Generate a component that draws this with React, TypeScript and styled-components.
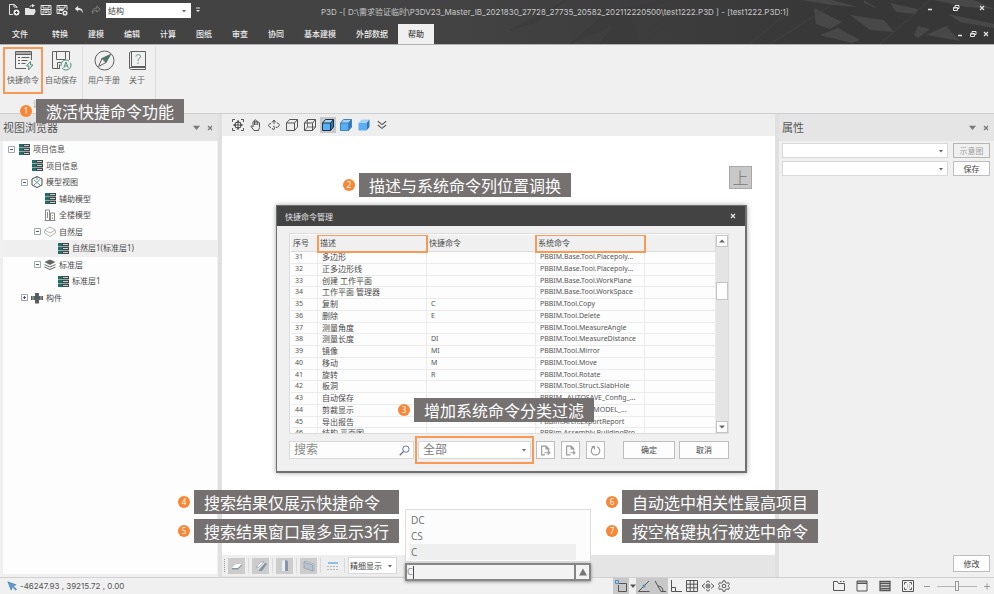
import React from "react";
import styled, { createGlobalStyle, css } from "styled-components";

const ACCENT = "#f89a56";
const BADGE = "#f88635";
const INK = "#555555";

const GlobalStyle = createGlobalStyle`
  *, *::before, *::after { box-sizing: border-box; }
  body { margin: 0; background: #f0f0f0; }
  body, button, input, select, table {
    font-family: "Noto Sans", "Noto Sans CJK SC", sans-serif;
    font-size: 8px;
    line-height: 12px;
    color: #4a4a4a;
  }
  button { padding: 0; margin: 0; cursor: default; }
  svg { display: block; flex: none; }
`;

/* ---------- shell ---------- */

const Shell = styled.div`
  position: relative;
  display: flex;
  flex-direction: column;
  min-height: 100vh;
  overflow: hidden;
`;

const Row = styled.div<{ $gap?: number }>`
  display: flex;
  align-items: center;
  gap: ${(p) => p.$gap ?? 0}px;
`;

const GhostButton = styled.button<{ $size?: number; $on?: boolean }>`
  display: grid;
  place-items: center;
  flex: none;
  width: ${(p) => p.$size ?? 16}px;
  height: ${(p) => Math.min(p.$size ?? 16, 16)}px;
  border: 0;
  color: inherit;
  background: ${(p) => (p.$on ? "#c8c8c8" : "transparent")};
`;

/* ---------- header ---------- */

const Header = styled.header`
  position: relative;
  background: linear-gradient(90deg, #434343 45%, #373737 85%);
  color: #e4e4e4;
  border-bottom: 1px solid #b0b0b0;
`;

const Shards = styled.svg`
  position: absolute;
  right: 0;
  top: 0;
  width: 544px;
  height: 44px;
`;

const TitleRow = styled.div`
  position: relative;
  display: grid;
  grid-template-columns: 313px 1fr 68px;
  height: 24px;
  padding: 0 0 4px 8px;
`;

const TitleText = styled.h1`
  margin: 3px 0 0;
  align-self: center;
  font-family: Inter, "Noto Sans CJK SC", sans-serif;
  font-size: 8px;
  font-weight: 400;
  white-space: nowrap;
  color: #c8c8c8;
`;

const WindowButtons = styled.div`
  display: flex;
  align-items: center;
  justify-content: space-between;
  height: 16px;
  padding-right: 8px;
`;

const TabRow = styled.nav`
  position: relative;
  display: flex;
  height: 20px;
  padding-left: 2px;
`;

const Tab = styled.button<{ $active?: boolean }>`
  border: 0;
  padding: 0 10px;
  background: ${(p) => (p.$active ? "#f0f0f0" : "transparent")};
  color: ${(p) => (p.$active ? "#444" : "#eeeeee")};
  font-weight: 500;
  white-space: nowrap;
  &:first-child { margin-right: 4px; }
`;

const MdiButtons = styled.div`
  display: flex;
  align-items: center;
  margin-left: auto;
  padding-right: 2px;
`;

/* ---------- combo box ---------- */

const ComboFrame = styled.span<{ $w?: number; $h?: number; $text?: number; $plain?: boolean }>`
  display: grid;
  align-items: center;
  flex: ${(p) => (p.$w ? "none" : "1")};
  width: ${(p) => (p.$w ? p.$w + "px" : "auto")};
  height: ${(p) => p.$h ?? 15}px;
  border: 1px solid ${(p) => (p.$plain ? "#ffffff" : "#d9d9d9")};
  background: #ffffff;
  color: #666;
  select {
    grid-area: 1 / 1;
    appearance: none;
    width: 100%;
    border: 0;
    padding: 0 10px 0 ${(p) => (p.$text ? 4 : 1)}px;
    background: transparent;
    font-size: ${(p) => p.$text ?? 8}px;
    line-height: 14px;
    color: ${(p) => (p.$text ? "#7b7b7b" : "#444")};
  }
  svg {
    grid-area: 1 / 1;
    justify-self: end;
    margin-right: 4px;
    pointer-events: none;
  }
`;

const Caret = ({ s = 4 }: { s?: number }) => (
  <svg width={s} height={s} viewBox="0 0 4 4">
    <path d="M0 1h4L2 3.4z" fill="currentColor" />
  </svg>
);

type ComboProps = { label: string; value: string; w?: number; h?: number; text?: number; plain?: boolean };
const Combo = ({ label, value, w, h, text, plain }: ComboProps) => (
  <ComboFrame $w={w} $h={h} $text={text} $plain={plain}>
    <select aria-label={label} defaultValue={value}>
      <option>{value}</option>
    </select>
    <Caret />
  </ComboFrame>
);

/* ---------- icons ---------- */

type IconProps = { size?: number; children: React.ReactNode; box?: number; sw?: number };
const Icon = ({ size = 12, box = 12, sw = 1, children }: IconProps) => (
  <svg width={size} height={size} viewBox={`0 0 ${box} ${box}`} fill="none" stroke="currentColor" strokeWidth={sw}>
    {children}
  </svg>
);

const NewIcon = () => (
  <Icon>
    <path d="M5 10.5H1.5v-10h5l2.5 2.500V4M6 .5V3h3" />
    <circle cx="8.500" cy="8.500" r="3" fill="#eee" stroke="none" />
    <path d="M8.500 7v3M7 8.500h3" stroke="#444" />
  </Icon>
);
const OpenIcon = () => (
  <Icon>
    <path d="M1 11V4h4l1 1h5v1.500H4L2 11zM2 11l2-4.500h8L10 11z" fill="currentColor" stroke="none" />
    <path d="M6 3c0-1 1-1.500 2.500-1.500" />
    <path d="M8 0l3 1.500L8 3.500z" fill="currentColor" stroke="none" />
  </Icon>
);
const SaveIcon = () => (
  <Icon>
    <path d="M1 1.500h10v9H1zM3 1.500V4h6V1.500M3 10.500V7h6v3.500M4.500 8.500h3M1 5.500h10" />
  </Icon>
);
const SaveAsIcon = () => (
  <Icon>
    <path d="M6 9.500H1v-8h10V6M3 1.500V4h6V1.500M3 9.500v-3h4M1 5.500h7" />
    <circle cx="9" cy="9" r="1.800" strokeWidth="1.600" />
  </Icon>
);
const UndoIcon = () => (
  <Icon size={10}>
    <path d="M5 1L1 4.500 5 8V6c3-.5 4.500.5 5 4 1.500-4-1-6.500-5-6.500z" fill="currentColor" stroke="none" />
  </Icon>
);
const RedoIcon = () => (
  <Icon size={10}>
    <path d="M7 1.500L11 5 7 8.500v-2C4 6 2.500 7 2 10 .5 6.500 3 3.800 7 3.800z" stroke="#8a8a8a" />
  </Icon>
);
const MinIcon = () => (
  <Icon size={8} box={8}>
    <path d="M2 5.500h4" strokeWidth="1.500" />
  </Icon>
);
const RestoreIcon = () => (
  <Icon size={8} box={8}>
    <path d="M1.500 3.500h4v3h-4zM3 3.500v-2h4v3H5.500M1.500 4h4" />
  </Icon>
);
const CloseIcon = () => (
  <Icon size={8} box={8}>
    <path d="M2 2l4 4M6 2L2 6" strokeWidth="1.200" />
  </Icon>
);

const ShortcutIcon = () => (
  <Icon size={21} box={21}>
    <path d="M13 18.500H2.500v-17h16V10M2.500 4.500h16M5 7.500h2M8.500 7.500h8M5 10.500h2M8.500 10.500h6M5 13.500h2M8.500 13.500h4" />
    <path d="M3 2h15v2H3z" fill="#aaa" stroke="none" />
    <path d="M17.500 11.500L13.500 16H16l-.5 4 4.500-5h-2.500z" stroke="#4f8f7c" />
  </Icon>
);
const AutosaveIcon = () => (
  <Icon size={21} box={21}>
    <path d="M9 18.500H1.500v-17h17V10M5.500 1.500v8h9v-8M6.500 18v-5.500h4M8.500 14.500V18" />
    <circle cx="15" cy="15" r="5" stroke="#4f8f7c" strokeDasharray="12 2" />
    <path d="M12.800 17.800L15 12l2.200 5.800M13.600 16h2.800" stroke="#4f8f7c" />
  </Icon>
);
const CompassIcon = () => (
  <Icon size={21} box={21}>
    <circle cx="10.500" cy="10.500" r="9.500" />
    <path d="M16.500 4.500L8 8.500l4 4z" fill="#3d8271" />
    <path d="M8 8.500L4.500 16.500l7.500-4z" fill="#f0f0f0" />
  </Icon>
);
const AboutIcon = () => (
  <Icon size={21} box={21}>
    <path d="M4.500 1.500h14v15h-14zM4.500 1.500C3 1.500 2.500 2 2.500 4v13c0 2 .5 2.500 2 2.500h14v-3M3 17.500h15" />
    <path d="M9 6.500C9 4 13.500 4 13.500 6.500 13.500 8.500 11 8 11 11M11 12.500V14" stroke="#4f8f7c" />
  </Icon>
);

const ListIcon = () => (
  <Icon size={11} box={11}>
    <path d="M0 0h11v11H0z" fill="#3c4a4a" stroke="none" />
    <path d="M0 0h4v3H0zM0 4h4v3H0zM0 8h4v3H0z" fill="#1d6f6b" stroke="none" />
    <path d="M5 1.500h5M5 5.500h5M5 9.500h5" stroke="#c5d0d0" />
    <path d="M0 3.500h11M0 7.500h11" stroke="#fff" strokeWidth=".5" />
  </Icon>
);
const ModelIcon = () => (
  <Icon size={12}>
    <path d="M6 .5l5 2.500v6L6 11.500 1 9V3z" />
    <path d="M3 4l6 5M9 3.500L3 9M6 .5V4" stroke="#3d8271" strokeWidth=".8" />
  </Icon>
);
const BuildingIcon = () => (
  <Icon size={12}>
    <path d="M.5 11.500h11M1.500 11.500V1h4v10.500M6.500 11.500V4h4v7.500M3.500 3v6M8.500 6v1M8.500 8.500v1.500" stroke="#888" />
  </Icon>
);
const LayerIcon = () => (
  <Icon size={12}>
    <path d="M6 1l5.500 3L6 7 .5 4zM.5 5v2L6 10.500 11.500 7V5" stroke="#b5b5b5" />
  </Icon>
);
const LayersIcon = () => (
  <Icon size={12}>
    <path d="M6 .5L11.500 3 6 6 .5 3z" fill="#666" stroke="none" />
    <path d="M.5 5.500L6 8l5.500-2.500M.5 8L6 10.500 11.500 8" stroke="#666" />
  </Icon>
);
const PartIcon = () => (
  <Icon size={12}>
    <path d="M4 1h4v3h4v4H8v3.500H4V8H0V4h4z" fill="#5c5c5c" stroke="none" />
    <path d="M2 4v4M10 4v4" stroke="#ddd" strokeWidth=".7" />
    <path d="M5 4h2v3H5z" fill="#1d6f6b" stroke="none" />
  </Icon>
);
const ExpandBox = ({ open }: { open: boolean }) => (
  <Icon size={7} box={7}>
    <path d="M.5.5h6v6h-6z" stroke="#a5a5a5" fill="#fff" />
    <path d={open ? "M2 3.500h3" : "M2 3.500h3M3.500 2v3"} stroke="#3c5a9a" />
  </Icon>
);

const FitIcon = () => (
  <Icon>
    <path d="M.5 3V.5H3M9 .5h2.500V3M11.500 9v2.500H9M3 11.500H.5V9M6 1.500v9M1.500 6h9" />
    <path d="M3.500 3.500h5v5h-5z" />
    <path d="M6 1l1.500 2h-3zM6 11l1.500-2h-3zM1 6l2-1.500v3zM11 6L9 4.500v3z" fill="currentColor" stroke="none" />
  </Icon>
);
const HandIcon = () => (
  <Icon>
    <path d="M4 11.500L1 7.500c0-1 1-1 2 .5V3c0-1 1.500-1 1.500 0V1.500c0-1 1.500-1 1.500 0V3c0-1.500 1.700-1.500 1.700 0v1c0-1 1.800-1 1.800 0v4.500l-1 3zM4.500 3v3M6 3v3M7.700 4v2" />
  </Icon>
);
const OrbitIcon = () => (
  <Icon>
    <path d="M3 8.500C-.5 7.500 0 5 3 4.500M9 4c3.500.5 3 4-1 4.500M4 3.500l2-2.500 2 2.500M6 1.500V5M5 7l2 1.500L5.500 11l-1.500-2" />
  </Icon>
);
const CubeIcon = ({ mode }: { mode: "wire" | "hidden" | "edged" | "shaded" | "flat" }) => {
  const solid = mode !== "wire" && mode !== "hidden";
  const line = mode === "edged" ? "#1f3347" : mode === "shaded" ? "#3f82b8" : "#555";
  return (
    <Icon>
      {solid && <path d="M.5 4h8v7.500h-8z" fill="#5aaef5" stroke="none" />}
      {solid && <path d="M.5 4L3.500.5h8L8.500 4z" fill="#a5d3fa" stroke="none" />}
      {solid && <path d="M8.500 4l3-3.500V8l-3 3.500z" fill="#2f78b8" stroke="none" />}
      {mode !== "flat" && <path d="M.5 4h8v7.500h-8zM.5 4L3.500.5h8L8.500 4M11.500.5V8l-3 3.500" stroke={line} />}
      {mode === "hidden" && <path d="M3.500.5V8h8M3.500 8l-3 3.500" stroke={line} strokeWidth=".8" />}
    </Icon>
  );
};
const MoreIcon = () => (
  <Icon size={10}>
    <path d="M1 1.500l5 4 5-4M1 6l5 4 5-4" strokeWidth="1.300" />
  </Icon>
);

/* ---------- ribbon ---------- */

const Ribbon = styled.section`
  display: flex;
  height: 69px;
  padding-top: 2px;
  background: #f0f0f0;
  border-bottom: 1px solid #cfcfcf;
`;

const RibbonGroup = styled.div`
  display: flex;
  flex-direction: column;
  align-items: center;
  padding: 0 3px;
  border-right: 1px solid #dedede;
`;

const RibbonButton = styled.button<{ $marked?: boolean; $wide?: boolean }>`
  display: flex;
  flex-direction: column;
  align-items: center;
  gap: 3px;
  min-width: ${(p) => (p.$wide ? 40 : 30)}px;
  height: 47px;
  padding-top: 1px;
  border: 2px solid ${(p) => (p.$marked ? ACCENT : "transparent")};
  background: transparent;
  white-space: nowrap;
  color: #606060;
`;

const GroupCaption = styled.span`
  margin-top: 4px;
  color: #999;
`;

/* ---------- workspace ---------- */

const Workspace = styled.main`
  display: grid;
  grid-template-columns: 218px minmax(0, 1fr) 215px;
  column-gap: 4px;
  flex: 1;
  background: #e0e0e0;
`;

const Side = styled.aside`
  display: flex;
  flex-direction: column;
  background: #f0f0f0;
`;

const PanelHeader = styled.div`
  display: flex;
  align-items: center;
  height: 27px;
  padding: 0 2px 0 3px;
  background: #e5e5e5;
  color: #777;
`;

const PanelTitle = styled.h2`
  margin: 0 auto 0 0;
  font-size: 11px;
  font-weight: 400;
  line-height: 16px;
  color: ${INK};
`;

const Tree = styled.ul`
  flex: 1;
  margin: 0 1px 3px 3px;
  padding: 0;
  list-style: none;
  background: #fdfdfd;
`;

const TreeRows = styled.div`
  display: grid;
  grid-auto-rows: 1fr;
  height: 165px;
`;

const TreeItem = styled.li<{ $level: number; $selected?: boolean }>`
  display: grid;
  grid-template-columns: 7px 12px 1fr;
  column-gap: 3px;
  align-items: center;
  padding-left: ${(p) => 5 + p.$level * 13}px;
  background: ${(p) => (p.$selected ? "#efefef" : "transparent")};
  white-space: nowrap;
  svg { justify-self: end; }
`;

const Center = styled.section`
  display: flex;
  flex-direction: column;
  background: #e5e5e5;
`;

const ViewToolbar = styled.div`
  display: flex;
  align-items: center;
  gap: 2px;
  height: 22px;
  padding-left: 8px;
  background: #eeeeee;
  color: ${INK};
`;

const Canvas = styled.div`
  flex: 1;
  padding: 30px 23px;
  background: #ffffff;
`;

const ViewCube = styled.button`
  display: grid;
  place-items: center;
  width: 23px;
  height: 23px;
  margin-left: auto;
  border: 1px solid #a8a8a8;
  background: #c8c8c8;
  font-size: 16px;
  line-height: 20px;
  font-weight: 300;
  color: #777;
`;

const DisplayBar = styled.div`
  display: flex;
  align-items: center;
  align-self: flex-start;
  gap: 3px;
  height: 21px;
  padding: 0 7px 0 2px;
  margin-bottom: 1px;
  background: #eeeeee;
`;

const Grip = styled.span`
  height: 13px;
  border-left: 1px dotted #999;
`;

const Divider = styled.span`
  width: 1px;
  height: 15px;
  background: #dadada;
`;

const TileButton = styled.button<{ $on?: boolean }>`
  display: grid;
  place-items: center;
  width: 17px;
  height: 16px;
  border: 0;
  background: ${(p) => (p.$on ? "#cccccc" : "transparent")};
`;

const PropertyRows = styled.div`
  display: grid;
  grid-template-columns: 1fr 37px;
  gap: 3px 5px;
  padding: 2px 4px 0 3px;
`;

const PushButton = styled.button<{ $w?: number; $dim?: boolean; $h?: number }>`
  display: grid;
  place-items: center;
  flex: none;
  width: ${(p) => p.$w ?? 37}px;
  height: ${(p) => p.$h ?? 15}px;
  border: 1px solid ${(p) => (p.$dim ? "#b5b5b5" : "#bdbdbd")};
  background: ${(p) => (p.$dim ? "#f0f0f0" : "#fdfdfd")};
  color: ${(p) => (p.$dim ? "#a0a0a0" : "#444")};
`;

const SideFooter = styled.div`
  display: flex;
  justify-content: flex-end;
  margin-top: auto;
  padding: 0 4px 5px;
`;

/* ---------- status bar ---------- */

const StatusBar = styled.footer`
  display: flex;
  align-items: center;
  height: 17px;
  padding: 0 3px 0 7px;
  background: #f0f0f0;
  border-top: 1px solid #d0d0d0;
  color: ${INK};
`;

const Coordinates = styled.output`
  font-family: Inter, sans-serif;
`;

const StatusTools = styled.div`
  display: flex;
  align-items: center;
  margin-left: auto;
`;

const ViewTools = styled.div`
  display: flex;
  align-items: center;
  gap: 7px;
  margin-left: 99px;
`;

const Zoom = styled.input`
  appearance: none;
  width: 40px;
  height: 12px;
  margin: 0;
  background: linear-gradient(#b5b5b5, #b5b5b5) center / 100% 1px no-repeat;
  &::-webkit-slider-thumb {
    appearance: none;
    width: 4px;
    height: 10px;
    border: 1px solid #9a9a9a;
    background: #f0f0f0;
  }
`;

/* ---------- dialog ---------- */

const Dialog = styled.section`
  position: absolute;
  left: 276px;
  top: 205px;
  width: 471px;
  border: 1px solid #707070;
  border-width: 1px 2px 2px 1px;
  background: #f0f0f0;
  box-shadow: 0 0 5px rgba(0, 0, 0, 0.35);
`;

const DialogTitle = styled.header`
  display: flex;
  align-items: center;
  justify-content: space-between;
  height: 20px;
  padding: 0 4px 0 8px;
  background: #434343;
  color: #e4e4e4;
  h2 {
    margin: 2px 0 0;
    font-size: 8px;
    font-weight: 400;
  }
`;

const DialogBody = styled.div`
  padding: 7px 16px 7px 12px;
`;

const GridFrame = styled.div`
  display: grid;
  grid-template-columns: 1fr 12px;
  height: 201px;
  padding: 1px 0 0 1px;
  border: 1px solid #dcdcdc;
  overflow: hidden;
  background: #fdfdfd;
`;

const CommandTable = styled.table`
  display: block;
  min-width: 0;
  height: 198px;
  overflow: hidden;
  tr {
    display: grid;
    grid-template-columns: 27px 109px 109px 109px 1fr;
  }
  thead { display: block; }
  tbody {
    display: grid;
    grid-auto-rows: minmax(0, 1fr);
    height: 188px;
  }
`;

const Th = styled.th<{ $marked?: boolean }>`
  height: 17px;
  padding: 2px;
  border-right: 1px solid #dcdcdc;
  border-bottom: 1px solid #dcdcdc;
  background: #f0f0f0;
  text-align: left;
  font-weight: 400;
  white-space: nowrap;
  ${(p) =>
    p.$marked &&
    css`
      position: relative;
      outline: 2px solid ${ACCENT};
      outline-offset: -1px;
    `}
`;

const Td = styled.td<{ $kind?: "num" | "code" }>`
  padding: 0 4px;
  border-right: 1px solid #ebebeb;
  border-bottom: 1px solid #ebebeb;
  background: #fdfdfd;
  line-height: 10px;
  white-space: nowrap;
  color: ${(p) => (p.$kind ? "#555" : "#4a4a4a")};
  font-size: ${(p) => (p.$kind ? 7 : 8)}px;
`;

const ScrollTrack = styled.div`
  display: flex;
  flex-direction: column;
  justify-content: space-between;
  background: #e4e4e4;
`;

const ScrollPart = styled.button<{ $thumb?: boolean }>`
  display: grid;
  place-items: center;
  width: 12px;
  height: ${(p) => (p.$thumb ? 18 : 12)}px;
  margin-bottom: ${(p) => (p.$thumb ? 86 : 0)}px;
  border: 1px solid #c4c4c4;
  background: #fdfdfd;
  color: #666;
`;

const ActionRow = styled.div`
  display: flex;
  align-items: center;
  margin-top: 2px;
`;

const SearchBox = styled.label`
  display: flex;
  align-items: center;
  width: 125px;
  height: 18px;
  margin-right: 1px;
  padding-right: 3px;
  border: 1px solid #d9d9d9;
  background: #fdfdfd;
  color: #4f6f9f;
  input {
    flex: 1;
    min-width: 0;
    border: 0;
    padding: 0 4px;
    background: transparent;
    outline: 0;
    font-size: 12px;
    line-height: 14px;
  }
  input::placeholder { color: #8a8a8a; }
`;

const FilterMark = styled.div`
  display: flex;
  width: 119px;
  margin-right: 2px;
  padding: 3px 1px;
  border: 2px solid ${ACCENT};
`;

const ActionIcons = styled.div`
  display: flex;
  gap: 6px;
  color: #999;
`;

const Answers = styled.div`
  display: flex;
  gap: 4px;
  margin-left: auto;
`;

/* ---------- quick command box ---------- */

const QuickCommand = styled.div`
  position: absolute;
  left: 405px;
  bottom: 13px;
  width: 186px;
`;

const Suggestions = styled.ul`
  margin: 0 0 1px;
  padding: 2px 14px 1px 4px;
  list-style: none;
  border: 1px solid #dedede;
  background: #fcfcfc;
`;

const Suggestion = styled.li<{ $picked?: boolean }>`
  padding: 0 1px;
  font-size: 10px;
  line-height: 16px;
  color: #777;
  background: ${(p) => (p.$picked ? "#efefef" : "transparent")};
`;

const CommandLine = styled.div`
  display: flex;
  height: 18px;
  border: 2px solid #858585;
  background: #f3f3f3;
  box-shadow: 0 1px 3px rgba(0, 0, 0, 0.4);
  button {
    display: grid;
    place-items: center;
    width: 15px;
    border: 0;
    border-left: 2px solid #858585;
    background: #f3f3f3;
    color: #777;
  }
`;

const InputSlot = styled.label`
  display: flex;
  flex: 1;
  align-items: center;
  input {
    flex: none;
    width: 6px;
    padding: 0;
    border: 0;
    outline: 0;
    background: transparent;
    font-size: 9px;
    color: #888;
  }
  &::after {
    content: "";
    width: 1px;
    height: 13px;
    background: #444;
  }
`;

/* ---------- callouts ---------- */

const Callouts = styled.div<{ $left: number; $top: number }>`
  position: absolute;
  left: ${(p) => p.$left}px;
  top: ${(p) => p.$top}px;
  display: grid;
  grid-template-columns: 12px auto;
  gap: 5px 4px;
  align-items: center;
`;

const Badge = styled.span`
  width: 12px;
  height: 12px;
  border-radius: 50%;
  background: ${BADGE};
  color: #fff;
  text-align: center;
  font-size: 8px;
  line-height: 12px;
`;

const CalloutText = styled.p`
  margin: 0;
  padding: 0 10px;
  background: #767171;
  color: #ffffff;
  font-family: "Noto Sans CJK SC", sans-serif;
  font-size: 16px;
  line-height: 24px;
  white-space: nowrap;
`;

const Callout = ({ left, top, items }: { left: number; top: number; items: [number, string][] }) => (
  <Callouts $left={left} $top={top}>
    {items.map(([n, text]) => (
      <React.Fragment key={n}>
        <Badge>{n}</Badge>
        <CalloutText>{text}</CalloutText>
      </React.Fragment>
    ))}
  </Callouts>
);

/* ---------- data ---------- */

const tabs = ["文件", "转换", "建模", "编辑", "计算", "图纸", "审查", "协同", "基本建模", "外部数据", "帮助"];

const tree: { level: number; text: string; icon: React.ReactNode; open?: boolean; selected?: boolean }[] = [
  { level: 0, text: "项目信息", icon: <ListIcon />, open: true },
  { level: 1, text: "项目信息", icon: <ListIcon /> },
  { level: 1, text: "模型视图", icon: <ModelIcon />, open: true },
  { level: 2, text: "辅助模型", icon: <ListIcon /> },
  { level: 2, text: "全楼模型", icon: <BuildingIcon /> },
  { level: 2, text: "自然层", icon: <LayerIcon />, open: true },
  { level: 3, text: "自然层1(标准层1)", icon: <ListIcon />, selected: true },
  { level: 2, text: "标准层", icon: <LayersIcon />, open: true },
  { level: 3, text: "标准层1", icon: <ListIcon /> },
  { level: 1, text: "构件", icon: <PartIcon />, open: false },
];

const commands: [number, string, string, string][] = [
  [31, "多边形", "", "PBBIM.Base.Tool.Placepoly..."],
  [32, "正多边形线", "", "PBBIM.Base.Tool.Placepoly..."],
  [33, "创建 工作平面", "", "PBBIM.Base.Tool.WorkPlane"],
  [34, "工作平面 管理器", "", "PBBIM.Base.Tool.WorkSpace"],
  [35, "复制", "C", "PBBIM.Tool.Copy"],
  [36, "删除", "E", "PBBIM.Tool.Delete"],
  [37, "测量角度", "", "PBBIM.Tool.MeasureAngle"],
  [38, "测量长度", "DI", "PBBIM.Tool.MeasureDistance"],
  [39, "镜像", "MI", "PBBIM.Tool.Mirror"],
  [40, "移动", "M", "PBBIM.Tool.Move"],
  [41, "旋转", "R", "PBBIM.Tool.Rotate"],
  [42, "板洞", "", "PBBIM.Tool.Struct.SlabHole"],
  [43, "自动保存", "", "PBBIM._AUTOSAVE_Config_..."],
  [44, "剪裁显示", "", "PBBIM.Tool.CLIPMODEL_..."],
  [45, "导出报告", "", "PBBim.Arch.ExportReport"],
  [46, "结构 平面图", "", "PBBim.Assembly.BuildingPro..."],
];

const tiles = [
  <Icon key="slab"><path d="M1 8l4-4h6L7 8z" fill="#fff" stroke="none" /><path d="M1 8h6v1.500H1zM7 8l4-4v1.500L7 9.500z" fill="#8794a5" stroke="none" /></Icon>,
  <Icon key="beam"><path d="M1 7l5-5h3L4 7z" fill="#fff" stroke="#8794a5" strokeWidth=".6" /><path d="M4 10l6-7h1.500v1.500L7 11H4z" fill="#8794a5" stroke="none" /><path d="M3 9l6-6" stroke="#eee" /></Icon>,
  <Icon key="column"><path d="M3 1l3-1v11H3z" fill="#e8eef4" stroke="none" /><path d="M6 0l3 1v10H6z" fill="#8794a5" stroke="none" /></Icon>,
  <Icon key="wall"><path d="M1 2l9 3v6L1 8z" fill="#b6c2cf" stroke="#8794a5" strokeWidth=".6" /><path d="M1 2l1.500-.8L11 4v6l-1 1V5z" fill="#eef2f6" stroke="#8794a5" strokeWidth=".6" /></Icon>,
  <Icon key="level"><path d="M1 3h10" stroke="#8fbfe8" strokeWidth="2" /><path d="M0 6.500h12M0 9.500h12" stroke="#b5b5b5" strokeDasharray="2 1" /></Icon>,
];

export default function App() {
  return (
    <Shell>
      <GlobalStyle />
      <Header>
        <Shards viewBox="0 0 544 44" preserveAspectRatio="none" aria-hidden="true">
          <path d="M150 44l18-24 12-2 10 26zM60 30l26-8 30-22M180 44l60-44M205 14l36 30M250 0l-60 44M120 44l40-34 60-10" fill="#3b3b3b" stroke="#3c3c3c" fillOpacity=".6" />
          <g fill="#484848">
            <path d="M400 15l34 5 10 12-24-2zM364 8l28 14-12 7-14-5zM370 35l18-7 22 12-8 3zM352 0h30l26 7-26-2zM414 0l14 9-14-6zM440 3l28 6-2 5-20-2zM468 26l12 3-12 9-4-3zM476 35l20-9 14 15zM484 0h40l20 9-28-2zM498 14l46 10v4l-34-6z" />
          </g>
          <path d="M300 44l40-34M320 44l60-38M430 44l50-44" stroke="#424242" />
        </Shards>
        <TitleRow>
          <Row $gap={4}>
            <GhostButton $size={12} aria-label="新建"><NewIcon /></GhostButton>
            <GhostButton $size={12} aria-label="打开"><OpenIcon /></GhostButton>
            <GhostButton $size={12} aria-label="保存文件"><SaveIcon /></GhostButton>
            <GhostButton $size={12} aria-label="另存为"><SaveAsIcon /></GhostButton>
            <GhostButton $size={14} aria-label="撤销"><UndoIcon /></GhostButton>
            <GhostButton $size={12} aria-label="重做"><RedoIcon /></GhostButton>
            <Combo label="专业" value="结构" w={85} h={15} plain />
            <GhostButton $size={6} aria-label="自定义"><Icon size={6} box={6}><path d="M1 1h4" /><path d="M1 3h4L3 5z" fill="currentColor" stroke="none" /></Icon></GhostButton>
          </Row>
          <TitleText>P3D -[ D:\需求验证临时\P3DV23_Master_IB_2021830_27728_27735_20582_202112220500\test1222.P3D ] - [test1222.P3D:1]</TitleText>
          <WindowButtons>
            <GhostButton $size={8} aria-label="最小化"><MinIcon /></GhostButton>
            <GhostButton $size={8} aria-label="还原"><RestoreIcon /></GhostButton>
            <GhostButton $size={8} aria-label="关闭"><CloseIcon /></GhostButton>
          </WindowButtons>
        </TitleRow>
        <TabRow>
          {tabs.map((t) => (
            <Tab key={t} $active={t === "帮助"}>{t}</Tab>
          ))}
          <MdiButtons>
            <GhostButton $size={13} aria-label="最小化视图"><MinIcon /></GhostButton>
            <GhostButton $size={13} aria-label="还原视图"><RestoreIcon /></GhostButton>
            <GhostButton $size={13} aria-label="关闭视图"><CloseIcon /></GhostButton>
          </MdiButtons>
        </TabRow>
      </Header>

      <Ribbon>
        <RibbonGroup>
          <Row>
            <RibbonButton $marked $wide><ShortcutIcon />快捷命令</RibbonButton>
            <RibbonButton><AutosaveIcon />自动保存</RibbonButton>
          </Row>
          <GroupCaption>设置</GroupCaption>
        </RibbonGroup>
        <RibbonGroup>
          <Row>
            <RibbonButton><CompassIcon />用户手册</RibbonButton>
            <RibbonButton><AboutIcon />关于</RibbonButton>
          </Row>
        </RibbonGroup>
      </Ribbon>

      <Workspace>
        <Side>
          <PanelHeader>
            <PanelTitle>视图浏览器</PanelTitle>
            <GhostButton $size={13} aria-label="面板菜单"><Caret s={7} /></GhostButton>
            <GhostButton $size={13} aria-label="关闭面板"><CloseIcon /></GhostButton>
          </PanelHeader>
          <Tree>
            <TreeRows>
              {tree.map((n, i) => (
                <TreeItem key={i} $level={n.level} $selected={n.selected}>
                  {n.open === undefined ? <span /> : <ExpandBox open={n.open} />}
                  {n.icon}
                  <span>{n.text}</span>
                </TreeItem>
              ))}
            </TreeRows>
          </Tree>
        </Side>

        <Center>
          <ViewToolbar>
            <GhostButton aria-label="全图"><FitIcon /></GhostButton>
            <GhostButton aria-label="平移"><HandIcon /></GhostButton>
            <GhostButton aria-label="环绕"><OrbitIcon /></GhostButton>
            <GhostButton aria-label="线框"><CubeIcon mode="wire" /></GhostButton>
            <GhostButton aria-label="消隐"><CubeIcon mode="hidden" /></GhostButton>
            <GhostButton $on aria-label="带边着色"><CubeIcon mode="edged" /></GhostButton>
            <GhostButton aria-label="着色"><CubeIcon mode="shaded" /></GhostButton>
            <GhostButton aria-label="平面着色"><CubeIcon mode="flat" /></GhostButton>
            <GhostButton aria-label="更多"><MoreIcon /></GhostButton>
          </ViewToolbar>
          <Canvas>
            <ViewCube>上</ViewCube>
          </Canvas>
          <DisplayBar>
            <Grip />
            {tiles.map((t, i) => (
              <React.Fragment key={i}>
                {i > 0 && <Divider />}
                <TileButton $on={i < 4} aria-label={`构件显示 ${i + 1}`}>{t}</TileButton>
              </React.Fragment>
            ))}
            <Divider />
            <Combo label="显示精度" value="精细显示" w={49} h={17} />
          </DisplayBar>
        </Center>

        <Side>
          <PanelHeader>
            <PanelTitle>属性</PanelTitle>
            <GhostButton $size={13} aria-label="属性菜单"><Caret s={7} /></GhostButton>
            <GhostButton $size={13} aria-label="关闭属性"><CloseIcon /></GhostButton>
          </PanelHeader>
          <PropertyRows>
            <Combo label="类型" value="" />
            <PushButton $dim>示意图</PushButton>
            <Combo label="样式" value="" />
            <PushButton>保存</PushButton>
          </PropertyRows>
          <SideFooter>
            <PushButton $h={17}>修改</PushButton>
          </SideFooter>
        </Side>
      </Workspace>

      <StatusBar>
        <Row $gap={3}>
          <Icon size={10}><path d="M1 1l4 10 1.500-4 4 4 1-1-4-4L11 4.500z" fill="#5a9bd5" stroke="#3f6f9f" strokeWidth=".6" /></Icon>
          <Coordinates>-46247.93 , 39215.72 , 0.00</Coordinates>
        </Row>
        <StatusTools>
          <GhostButton $on aria-label="捕捉"><Icon><path d="M4 3.500h7.500v8h-8V5" /><path d="M.5.5h3v3h-3z" stroke="#4a8fd0" /></Icon></GhostButton>
          <GhostButton $size={7} aria-label="捕捉选项"><Caret s={6} /></GhostButton>
          <GhostButton $on aria-label="追踪"><Icon><path d="M.5 11.500h11M.5 11.500L11 1" /><circle cx="6" cy="6" r="1.500" fill="#4a8fd0" stroke="none" /></Icon></GhostButton>
          <GhostButton $on aria-label="极轴"><Icon><path d="M1 1l6 10.500h5M4 6c3 0 5 2 5 5.500" /></Icon></GhostButton>
          <GhostButton aria-label="正交"><Icon><path d="M1.500 0v11.500H12M1.500 7.500h4v4" /></Icon></GhostButton>
          <GhostButton aria-label="栅格"><Icon><path d="M.5.500h11v11H.5zM4.200.5v11M7.800.5v11M.5 4.200h11M.5 7.800h11" /></Icon></GhostButton>
          <GhostButton aria-label="可见性"><Icon><path d="M0 6l3-2.500M0 6l3 2.500M12 6L9 3.500M12 6L9 8.500M4 2.500L6 .8l2 1.700M4 9.500l2 1.700 2-1.700" /><circle cx="6" cy="6" r="2" /><circle cx="6" cy="6" r=".6" /></Icon></GhostButton>
          <GhostButton aria-label="设置"><Icon><circle cx="6" cy="6" r="1.800" /><path d="M5 .8h2l.4 1.600 1.500.8 1.600-.6 1 1.800-1.200 1.100v1.100l1.200 1.100-1 1.800-1.600-.6-1.500.8L7 11.300H5l-.4-1.600-1.500-.8-1.600.6-1-1.800 1.200-1.100V5.500L.5 4.400l1-1.800 1.600.6 1.500-.8z" /></Icon></GhostButton>
        </StatusTools>
        <ViewTools>
          <GhostButton aria-label="文件夹"><Icon><path d="M.5 10.500v-9h4l1 2h6v7zM7 1.500h1.500M10 1.500h1.500" /></Icon></GhostButton>
          <GhostButton aria-label="窗口"><Icon><path d="M1 1h10v10H1zM1 3.500h10M1 2h10" /></Icon></GhostButton>
          <GhostButton aria-label="列表"><Icon><path d="M1 1.500h10v9H1zM1 3.500h10M1 6h10M1 8.500h10" strokeWidth="1.300" /></Icon></GhostButton>
          <GhostButton aria-label="全屏"><Icon><path d="M.5.500h11v11H.5z" /><path d="M2.500 4.500v-2h2M7.500 2.500h2v2M9.500 7.500v2h-2M4.500 9.500h-2v-2M5 5h.5M7 5h.5M5 7h.5M7 7h.5" /></Icon></GhostButton>
          <Row $gap={6}>
            <GhostButton $size={8} aria-label="缩小"><Icon size={8} box={8}><path d="M1 4.500h6" stroke="#999" /></Icon></GhostButton>
            <Zoom type="range" aria-label="缩放" defaultValue={50} />
            <GhostButton $size={8} aria-label="放大"><Icon size={8} box={8}><path d="M1 4.500h6M4 1.500v6" stroke="#999" /></Icon></GhostButton>
          </Row>
        </ViewTools>
      </StatusBar>

      <Dialog role="dialog" aria-labelledby="dialog-title">
        <DialogTitle>
          <h2 id="dialog-title">快捷命令管理</h2>
          <GhostButton $size={16} aria-label="关闭对话框"><CloseIcon /></GhostButton>
        </DialogTitle>
        <DialogBody>
          <GridFrame>
            <CommandTable>
              <thead>
                <tr>
                  <Th>序号</Th>
                  <Th $marked>描述</Th>
                  <Th>快捷命令</Th>
                  <Th $marked>系统命令</Th>
                  <Th />
                </tr>
              </thead>
              <tbody>
                {commands.map(([no, text, key, cmd]) => (
                  <tr key={no}>
                    <Td $kind="num">{no}</Td>
                    <Td>{text}</Td>
                    <Td $kind="code">{key}</Td>
                    <Td $kind="code">{cmd}</Td>
                    <Td />
                  </tr>
                ))}
              </tbody>
            </CommandTable>
            <ScrollTrack>
              <ScrollPart aria-label="向上滚动"><Icon size={6} box={6}><path d="M0 4.500h6L3 1.500z" fill="currentColor" stroke="none" /></Icon></ScrollPart>
              <ScrollPart $thumb aria-label="滚动条" />
              <ScrollPart aria-label="向下滚动"><Icon size={6} box={6}><path d="M0 1.500h6L3 4.500z" fill="currentColor" stroke="none" /></Icon></ScrollPart>
            </ScrollTrack>
          </GridFrame>
          <ActionRow>
            <SearchBox>
              <input aria-label="搜索" placeholder="搜索" />
              <Icon size={11}><circle cx="7.500" cy="4.500" r="3.500" /><path d="M5 7L.8 11.200" strokeWidth="1.300" /></Icon>
            </SearchBox>
            <FilterMark>
              <Combo label="命令分类" value="全部" h={18} text={12} />
            </FilterMark>
            <ActionIcons>
              <PushButton $w={19} $h={18} aria-label="导入"><Icon size={11} box={10}><path d="M4.500 9H1.500V1h4L8 3.500V5M5.500 1v2.500H8M4 7h5M7 5l2 2-2 2" stroke="#999" /></Icon></PushButton>
              <PushButton $w={19} $h={18} aria-label="导出"><Icon size={11} box={10}><path d="M5 9H1.500V1h4L8 3.500V5M5.500 1v2.500H8M5 7h4M7.500 5.500L9 7 7.500 8.500" stroke="#999" /></Icon></PushButton>
              <PushButton $w={19} $h={18} aria-label="重置"><Icon size={11} box={10}><path d="M3.500 1.500C-.5 3.500 1 9 5 9s5.500-5.500 1.500-7.500M4 4V1.500H1.500" stroke="#999" /></Icon></PushButton>
            </ActionIcons>
            <Answers>
              <PushButton $w={52} $h={18}>确定</PushButton>
              <PushButton $w={50} $h={18}>取消</PushButton>
            </Answers>
          </ActionRow>
        </DialogBody>
      </Dialog>

      <QuickCommand>
        <Suggestions>
          <Suggestion>DC</Suggestion>
          <Suggestion>CS</Suggestion>
          <Suggestion $picked>C</Suggestion>
        </Suggestions>
        <CommandLine>
          <InputSlot>
            <input aria-label="快捷命令输入" defaultValue="C" />
          </InputSlot>
          <button aria-label="展开"><Icon size={8} box={8}><path d="M0 7.500h8L4 .5z" fill="currentColor" stroke="none" /></Icon></button>
        </CommandLine>
      </QuickCommand>

      <Callout left={20} top={99} items={[[1, "激活快捷命令功能"]]} />
      <Callout left={343} top={173} items={[[2, "描述与系统命令列位置调换"]]} />
      <Callout left={398} top={398} items={[[3, "增加系统命令分类过滤"]]} />
      <Callout left={178} top={490} items={[[4, "搜索结果仅展示快捷命令"], [5, "搜索结果窗口最多显示3行"]]} />
      <Callout left={606} top={490} items={[[6, "自动选中相关性最高项目"], [7, "按空格键执行被选中命令"]]} />
    </Shell>
  );
}
